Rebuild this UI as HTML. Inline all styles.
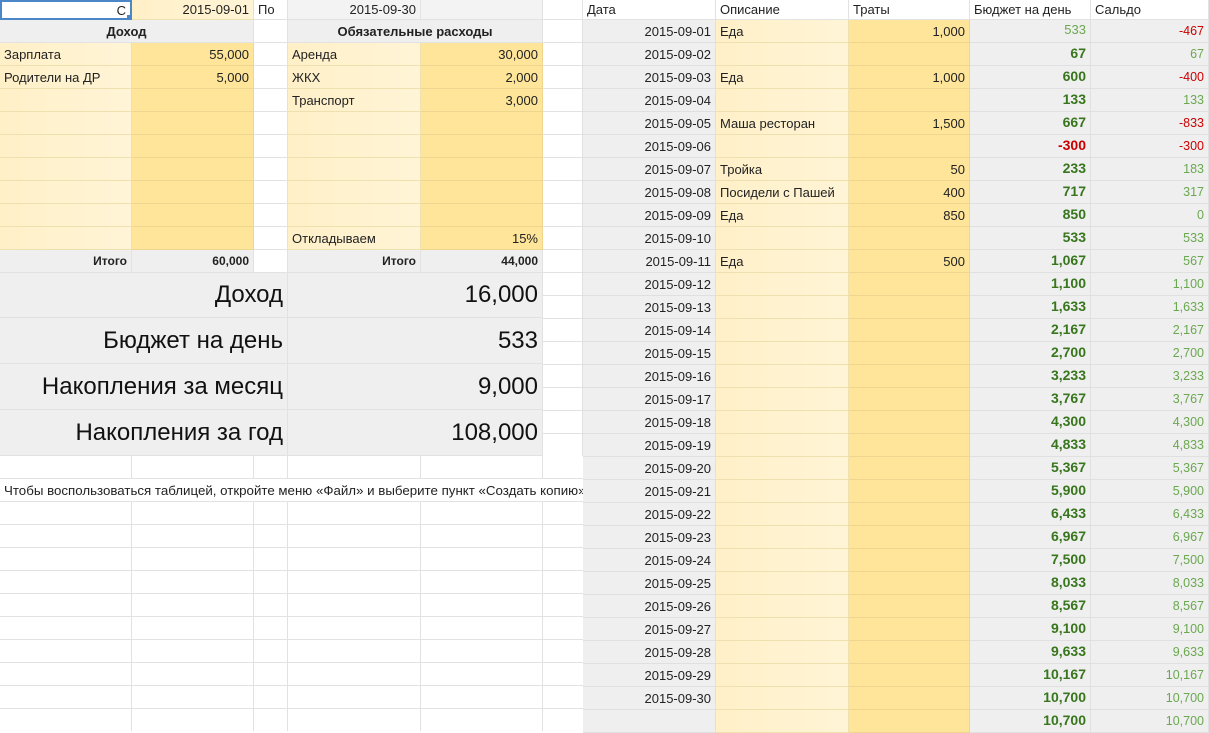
<!DOCTYPE html>
<html><head><meta charset="utf-8">
<style>
*{box-sizing:border-box;margin:0;padding:0}
body{width:1209px;height:731px;overflow:hidden;background:#fff;font-family:"Liberation Sans",Arial,sans-serif;font-size:13px;color:#222;position:relative}
.c{position:absolute;border-right:1px solid #e2e2e2;border-bottom:1px solid #e2e2e2;padding:0 4px;white-space:nowrap;overflow:visible;display:flex;align-items:center}
.r{justify-content:flex-end}
.m{justify-content:center}
.g{background:#efefef}
.g2{background:#f3f3f3}
.y1{background:linear-gradient(90deg,#fff0c8,#fff4d6);border-color:#efe0b0}
.y2{background:#ffe599;border-color:#eed590}
.b{font-weight:bold}
.big{font-size:24px;color:#111}
</style></head><body>
<div class="c r" style="left:0;top:0;width:132px;height:20px;border:2px solid #4a86c8;">С</div>
<div style="position:absolute;left:127px;top:15px;width:6px;height:6px;background:#4a86c8"></div>
<div class="c r y1" style="left:132px;top:0;width:122px;height:20px;">2015-09-01</div>
<div class="c" style="left:254px;top:0;width:34px;height:20px;">По</div>
<div class="c r g2" style="left:288px;top:0;width:133px;height:20px;">2015-09-30</div>
<div class="c g2" style="left:421px;top:0;width:122px;height:20px;"></div>
<div class="c" style="left:543px;top:0;width:40px;height:20px;"></div>
<div class="c m g b" style="left:0;top:20px;width:254px;height:23px;">Доход</div>
<div class="c" style="left:254px;top:20px;width:34px;height:23px;"></div>
<div class="c m g b" style="left:288px;top:20px;width:255px;height:23px;">Обязательные расходы</div>
<div class="c" style="left:543px;top:20px;width:40px;height:23px;"></div>

<!-- white gaps with grid lines -->
<div style="position:absolute;left:254px;top:43px;width:34px;height:230px;border-right:1px solid #e2e2e2;background:repeating-linear-gradient(180deg,transparent 0 22px,#e2e2e2 22px 23px)"></div>
<div style="position:absolute;left:543px;top:43px;width:40px;height:413px;border-right:1px solid #e2e2e2;background:repeating-linear-gradient(180deg,transparent 0 22px,#e2e2e2 22px 23px)"></div>

<div class="c y1" style="left:0;top:43px;width:132px;height:23px;">Зарплата</div>
<div class="c r y2" style="left:132px;top:43px;width:122px;height:23px;">55,000</div>
<div class="c y1" style="left:288px;top:43px;width:133px;height:23px;">Аренда</div>
<div class="c r y2" style="left:421px;top:43px;width:122px;height:23px;">30,000</div>
<div class="c y1" style="left:0;top:66px;width:132px;height:23px;">Родители на ДР</div>
<div class="c r y2" style="left:132px;top:66px;width:122px;height:23px;">5,000</div>
<div class="c y1" style="left:288px;top:66px;width:133px;height:23px;">ЖКХ</div>
<div class="c r y2" style="left:421px;top:66px;width:122px;height:23px;">2,000</div>
<div class="c y1" style="left:0;top:89px;width:132px;height:23px;"></div>
<div class="c r y2" style="left:132px;top:89px;width:122px;height:23px;"></div>
<div class="c y1" style="left:288px;top:89px;width:133px;height:23px;">Транспорт</div>
<div class="c r y2" style="left:421px;top:89px;width:122px;height:23px;">3,000</div>
<div class="c y1" style="left:0;top:112px;width:132px;height:23px;"></div><div class="c y2" style="left:132px;top:112px;width:122px;height:23px;"></div><div class="c y1" style="left:288px;top:112px;width:133px;height:23px;"></div><div class="c y2" style="left:421px;top:112px;width:122px;height:23px;"></div>
<div class="c y1" style="left:0;top:135px;width:132px;height:23px;"></div><div class="c y2" style="left:132px;top:135px;width:122px;height:23px;"></div><div class="c y1" style="left:288px;top:135px;width:133px;height:23px;"></div><div class="c y2" style="left:421px;top:135px;width:122px;height:23px;"></div>
<div class="c y1" style="left:0;top:158px;width:132px;height:23px;"></div><div class="c y2" style="left:132px;top:158px;width:122px;height:23px;"></div><div class="c y1" style="left:288px;top:158px;width:133px;height:23px;"></div><div class="c y2" style="left:421px;top:158px;width:122px;height:23px;"></div>
<div class="c y1" style="left:0;top:181px;width:132px;height:23px;"></div><div class="c y2" style="left:132px;top:181px;width:122px;height:23px;"></div><div class="c y1" style="left:288px;top:181px;width:133px;height:23px;"></div><div class="c y2" style="left:421px;top:181px;width:122px;height:23px;"></div>
<div class="c y1" style="left:0;top:204px;width:132px;height:23px;"></div><div class="c y2" style="left:132px;top:204px;width:122px;height:23px;"></div><div class="c y1" style="left:288px;top:204px;width:133px;height:23px;"></div><div class="c y2" style="left:421px;top:204px;width:122px;height:23px;"></div>
<div class="c y1" style="left:0;top:227px;width:132px;height:23px;"></div><div class="c y2" style="left:132px;top:227px;width:122px;height:23px;"></div>
<div class="c y1" style="left:288px;top:227px;width:133px;height:23px;">Откладываем</div>
<div class="c r y2" style="left:421px;top:227px;width:122px;height:23px;">15%</div>

<div class="c r g b" style="left:0;top:250px;width:132px;height:23px;font-size:12px">Итого</div>
<div class="c r g b" style="left:132px;top:250px;width:122px;height:23px;font-size:12px">60,000</div>
<div class="c r g b" style="left:288px;top:250px;width:133px;height:23px;font-size:12px">Итого</div>
<div class="c r g b" style="left:421px;top:250px;width:122px;height:23px;font-size:12px">44,000</div>

<div class="c r g big" style="left:0;top:273px;width:288px;height:45px;">Доход</div>
<div class="c r g big" style="left:288px;top:273px;width:255px;height:45px;">16,000</div>
<div class="c r g big" style="left:0;top:318px;width:288px;height:46px;">Бюджет на день</div>
<div class="c r g big" style="left:288px;top:318px;width:255px;height:46px;">533</div>
<div class="c r g big" style="left:0;top:364px;width:288px;height:46px;">Накопления за месяц</div>
<div class="c r g big" style="left:288px;top:364px;width:255px;height:46px;">9,000</div>
<div class="c r g big" style="left:0;top:410px;width:288px;height:46px;">Накопления за год</div>
<div class="c r g big" style="left:288px;top:410px;width:255px;height:46px;">108,000</div>

<div style="position:absolute;left:0;top:456px;width:583px;height:275px;
background-image:
linear-gradient(#e2e2e2,#e2e2e2),linear-gradient(#e2e2e2,#e2e2e2),linear-gradient(#e2e2e2,#e2e2e2),linear-gradient(#e2e2e2,#e2e2e2),linear-gradient(#e2e2e2,#e2e2e2),
repeating-linear-gradient(180deg,transparent 0 22px,#e2e2e2 22px 23px);
background-size:1px 100%,1px 100%,1px 100%,1px 100%,1px 100%,100% 100%;
background-position:131px 0,253px 0,287px 0,420px 0,542px 0,0 0;background-repeat:no-repeat"></div>
<div style="position:absolute;left:0;top:479px;width:583px;height:22px;background:#fff;display:flex;align-items:center;padding-left:4px;font-size:13.3px;white-space:nowrap;overflow:hidden">Чтобы воспользоваться таблицей, откройте меню «Файл» и выберите пункт «Создать копию»</div>

<div class="c" style="left:583px;top:0;width:133px;height:20px;">Дата</div>
<div class="c" style="left:716px;top:0;width:133px;height:20px;">Описание</div>
<div class="c" style="left:849px;top:0;width:121px;height:20px;">Траты</div>
<div class="c" style="left:970px;top:0;width:121px;height:20px;">Бюджет на день</div>
<div class="c" style="left:1091px;top:0;width:118px;height:20px;">Сальдо</div>

<div id="R" style="position:absolute;left:583px;top:20px;width:626px">
<style>
#R .row{display:flex;height:23px}
#R .row>div{border-right:1px solid #e0e0e0;border-bottom:1px solid #e0e0e0;display:flex;align-items:center;padding:0 4px;white-space:nowrap}
#R .d{width:133px;background:#efefef;justify-content:flex-end}
#R .o{width:133px;background:linear-gradient(90deg,#fff0c8,#fff4d6);border-color:#efe0b0 !important}
#R .t{width:121px;background:#ffe599;justify-content:flex-end;border-color:#eed590 !important}
#R .bd{width:121px;background:#efefef;justify-content:flex-end;font-weight:bold;font-size:14px;color:#38761d;padding-bottom:3px !important}
#R .s{width:118px;background:#efefef;justify-content:flex-end;font-size:12.5px;color:#6aa84f}
#R .rd{color:#cc0000}
</style>
<div class="row"><div class="d">2015-09-01</div><div class="o">Еда</div><div class="t">1,000</div><div class="bd" style="font-weight:normal;color:#6aa84f;font-size:13px">533</div><div class="s rd">-467</div></div>
<div class="row"><div class="d">2015-09-02</div><div class="o"></div><div class="t"></div><div class="bd">67</div><div class="s">67</div></div>
<div class="row"><div class="d">2015-09-03</div><div class="o">Еда</div><div class="t">1,000</div><div class="bd">600</div><div class="s rd">-400</div></div>
<div class="row"><div class="d">2015-09-04</div><div class="o"></div><div class="t"></div><div class="bd">133</div><div class="s">133</div></div>
<div class="row"><div class="d">2015-09-05</div><div class="o">Маша ресторан</div><div class="t">1,500</div><div class="bd">667</div><div class="s rd">-833</div></div>
<div class="row"><div class="d">2015-09-06</div><div class="o"></div><div class="t"></div><div class="bd rd">-300</div><div class="s rd">-300</div></div>
<div class="row"><div class="d">2015-09-07</div><div class="o">Тройка</div><div class="t">50</div><div class="bd">233</div><div class="s">183</div></div>
<div class="row"><div class="d">2015-09-08</div><div class="o">Посидели с Пашей</div><div class="t">400</div><div class="bd">717</div><div class="s">317</div></div>
<div class="row"><div class="d">2015-09-09</div><div class="o">Еда</div><div class="t">850</div><div class="bd">850</div><div class="s">0</div></div>
<div class="row"><div class="d">2015-09-10</div><div class="o"></div><div class="t"></div><div class="bd">533</div><div class="s">533</div></div>
<div class="row"><div class="d">2015-09-11</div><div class="o">Еда</div><div class="t">500</div><div class="bd">1,067</div><div class="s">567</div></div>
<div class="row"><div class="d">2015-09-12</div><div class="o"></div><div class="t"></div><div class="bd">1,100</div><div class="s">1,100</div></div>
<div class="row"><div class="d">2015-09-13</div><div class="o"></div><div class="t"></div><div class="bd">1,633</div><div class="s">1,633</div></div>
<div class="row"><div class="d">2015-09-14</div><div class="o"></div><div class="t"></div><div class="bd">2,167</div><div class="s">2,167</div></div>
<div class="row"><div class="d">2015-09-15</div><div class="o"></div><div class="t"></div><div class="bd">2,700</div><div class="s">2,700</div></div>
<div class="row"><div class="d">2015-09-16</div><div class="o"></div><div class="t"></div><div class="bd">3,233</div><div class="s">3,233</div></div>
<div class="row"><div class="d">2015-09-17</div><div class="o"></div><div class="t"></div><div class="bd">3,767</div><div class="s">3,767</div></div>
<div class="row"><div class="d">2015-09-18</div><div class="o"></div><div class="t"></div><div class="bd">4,300</div><div class="s">4,300</div></div>
<div class="row"><div class="d">2015-09-19</div><div class="o"></div><div class="t"></div><div class="bd">4,833</div><div class="s">4,833</div></div>
<div class="row"><div class="d">2015-09-20</div><div class="o"></div><div class="t"></div><div class="bd">5,367</div><div class="s">5,367</div></div>
<div class="row"><div class="d">2015-09-21</div><div class="o"></div><div class="t"></div><div class="bd">5,900</div><div class="s">5,900</div></div>
<div class="row"><div class="d">2015-09-22</div><div class="o"></div><div class="t"></div><div class="bd">6,433</div><div class="s">6,433</div></div>
<div class="row"><div class="d">2015-09-23</div><div class="o"></div><div class="t"></div><div class="bd">6,967</div><div class="s">6,967</div></div>
<div class="row"><div class="d">2015-09-24</div><div class="o"></div><div class="t"></div><div class="bd">7,500</div><div class="s">7,500</div></div>
<div class="row"><div class="d">2015-09-25</div><div class="o"></div><div class="t"></div><div class="bd">8,033</div><div class="s">8,033</div></div>
<div class="row"><div class="d">2015-09-26</div><div class="o"></div><div class="t"></div><div class="bd">8,567</div><div class="s">8,567</div></div>
<div class="row"><div class="d">2015-09-27</div><div class="o"></div><div class="t"></div><div class="bd">9,100</div><div class="s">9,100</div></div>
<div class="row"><div class="d">2015-09-28</div><div class="o"></div><div class="t"></div><div class="bd">9,633</div><div class="s">9,633</div></div>
<div class="row"><div class="d">2015-09-29</div><div class="o"></div><div class="t"></div><div class="bd">10,167</div><div class="s">10,167</div></div>
<div class="row"><div class="d">2015-09-30</div><div class="o"></div><div class="t"></div><div class="bd">10,700</div><div class="s">10,700</div></div>
<div class="row"><div class="d"></div><div class="o"></div><div class="t"></div><div class="bd">10,700</div><div class="s">10,700</div></div>
</div>
</body></html>
